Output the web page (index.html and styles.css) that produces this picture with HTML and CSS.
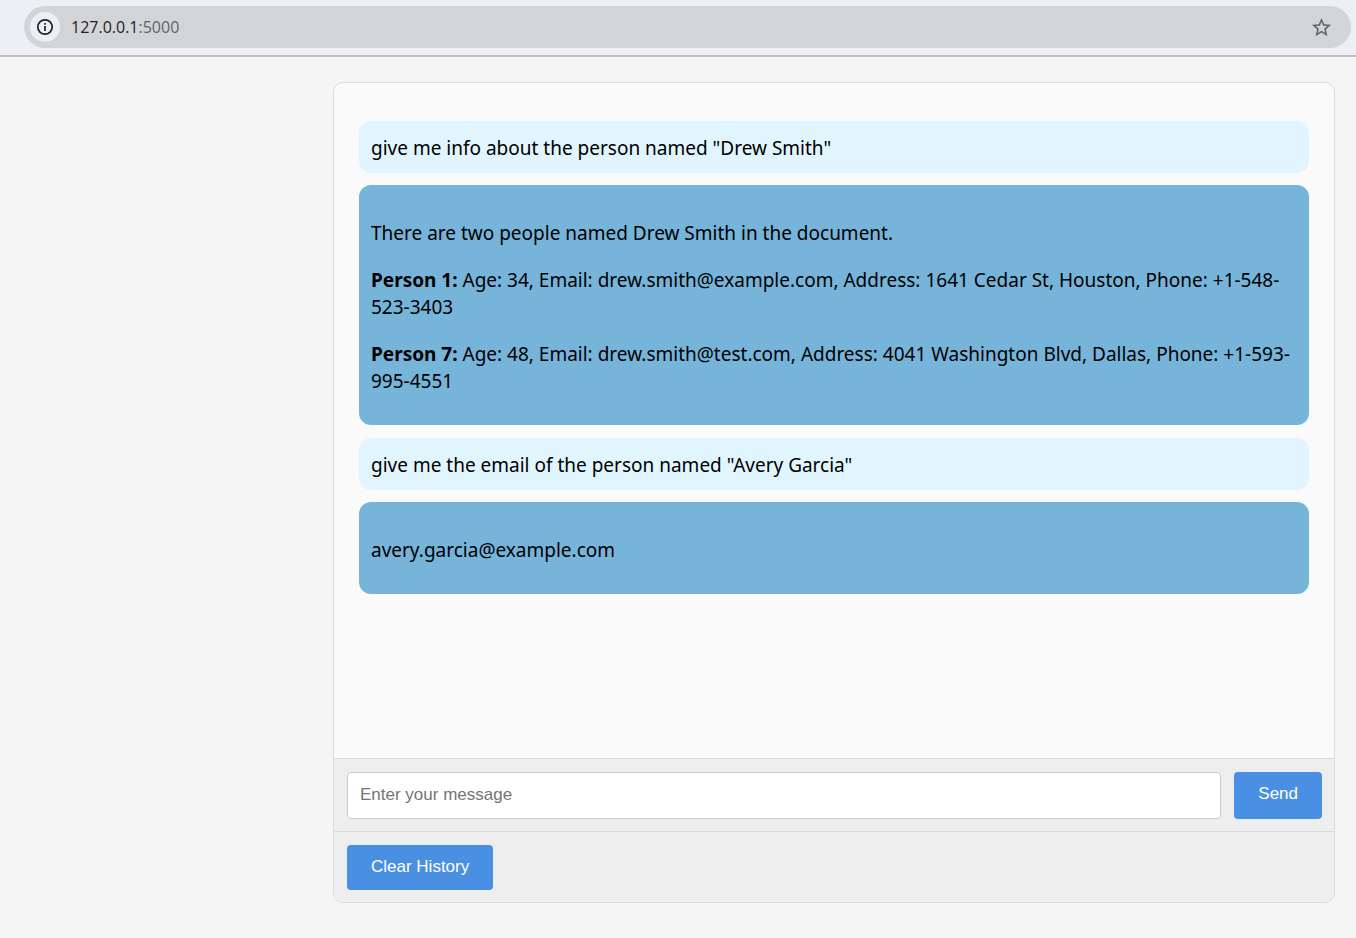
FILE: index.html
```html
<!DOCTYPE html>
<html lang="en">
<head>
<meta charset="utf-8">
<title>Chat</title>
<link rel="stylesheet" href="styles.css">
</head>
<body>
<header class="toolbar">
  <div class="address-bar">
    <button class="site-info" type="button" aria-label="View site information">
      <svg width="18" height="18" viewBox="0 0 18 18" fill="none" stroke="#202124" stroke-width="1.7"><circle cx="9" cy="9" r="7.2"/><path d="M9 8v5M9 5v1.8"/></svg>
    </button>
    <a class="url" href="#">127.0.0.1<span class="port">:5000</span></a>
    <button class="bookmark" type="button" aria-label="Bookmark this page">
      <svg width="23" height="23" viewBox="0 0 24 24" fill="#5f6368"><path d="M22 9.24l-7.19-.62L12 2 9.19 8.63 2 9.24l5.46 4.73L5.82 21 12 17.27 18.18 21l-1.63-7.03L22 9.24zM12 15.4l-3.76 2.27 1-4.28-3.32-2.88 4.38-.38L12 6.1l1.71 4.04 4.38.38-3.32 2.88 1 4.28L12 15.4z"/></svg>
    </button>
  </div>
</header>
<main class="page">
  <section class="chat">
    <div class="messages">
      <div class="message user">give me info about the person named "Drew Smith"</div>
      <div class="message bot">
        <p>There are two people named Drew Smith in the document.</p>
        <p><strong>Person 1:</strong> Age: 34, Email: drew.smith@example.com, Address: 1641 Cedar St, Houston, Phone: +1-548-523-3403</p>
        <p><strong>Person 7:</strong> Age: 48, Email: drew.smith@test.com, Address: 4041 Washington Blvd, Dallas, Phone: +1-593-995-4551</p>
      </div>
      <div class="message user">give me the email of the person named "Avery Garcia"</div>
      <div class="message bot">
        <p>avery.garcia@example.com</p>
      </div>
    </div>
    <form class="bar">
      <input class="entry" type="text" placeholder="Enter your message" aria-label="Enter your message">
      <button class="button send" type="button">Send</button>
    </form>
    <div class="bar">
      <button class="button" type="button">Clear History</button>
    </div>
  </section>
</main>
</body>
</html>
```
FILE: styles.css
```css
* {
  box-sizing: border-box;
}

body {
  margin: 0;
  min-height: 100vh;
  display: flex;
  flex-direction: column;
  background: #f5f5f5;
  color: #000;
  font-family: "Segoe UI", "Noto Sans", sans-serif;
  font-size: 19px;
  line-height: 27px;
}

.toolbar {
  padding: 6px 5px 7px 24px;
  background: #eeeff4;
  border-bottom: 2px solid #bdbfc4;
}

.address-bar {
  display: flex;
  align-items: center;
  height: 42px;
  padding: 0 18px 0 6px;
  border-radius: 21px;
  background: #d3d4d8;
}

.site-info,
.bookmark {
  display: flex;
  align-items: center;
  justify-content: center;
  padding: 0;
  border: 0;
  background: none;
}

.site-info {
  width: 30px;
  height: 30px;
  border-radius: 50%;
  background: #eeeff4;
}

.bookmark {
  margin-left: auto;
}

.url {
  margin-left: 11px;
  color: #202124;
  font-family: "Segoe UI", "Open Sans", sans-serif;
  font-size: 16px;
  text-decoration: none;
}

.port {
  color: #5f6368;
}

.page {
  flex: 1;
  display: flex;
  justify-content: flex-end;
  padding: 25px 21px 35px;
}

.chat {
  display: flex;
  flex-direction: column;
  width: 100%;
  max-width: 1002px;
  border: 1px solid #dcdcdc;
  border-radius: 10px;
  background: #fafafa;
  overflow: hidden;
}

.messages {
  flex: 1;
  display: flex;
  flex-direction: column;
  gap: 12px;
  padding: 38px 25px 25px;
}

.message {
  border-radius: 12px;
}

.user {
  padding: 14px 12px 11px;
  background: #e1f5fe;
}

.bot {
  margin-bottom: 1px;
  padding: 15px 12px 10px;
  background: #76b4da;
}

.bot p {
  margin: 20px 0;
}

.bar {
  display: flex;
  gap: 13px;
  padding: 13px 12px 12px 13px;
  border-top: 1px solid #dcdcdc;
  background: #eee;
}

.entry,
.button {
  border-radius: 4px;
  font-family: "Liberation Sans", Arial, sans-serif;
  font-size: 17px;
}

.entry {
  flex: 1;
  min-width: 0;
  padding: 11px 12px 13px;
  border: 1px solid #ccc;
  background: #fff;
}

.entry::placeholder {
  color: #757575;
}

.button {
  padding: 12px 24px 14px;
  border: 0;
  background: #4a90e2;
  color: #fff;
  line-height: 19px;
}

.send {
  padding-bottom: 16px;
}
```
